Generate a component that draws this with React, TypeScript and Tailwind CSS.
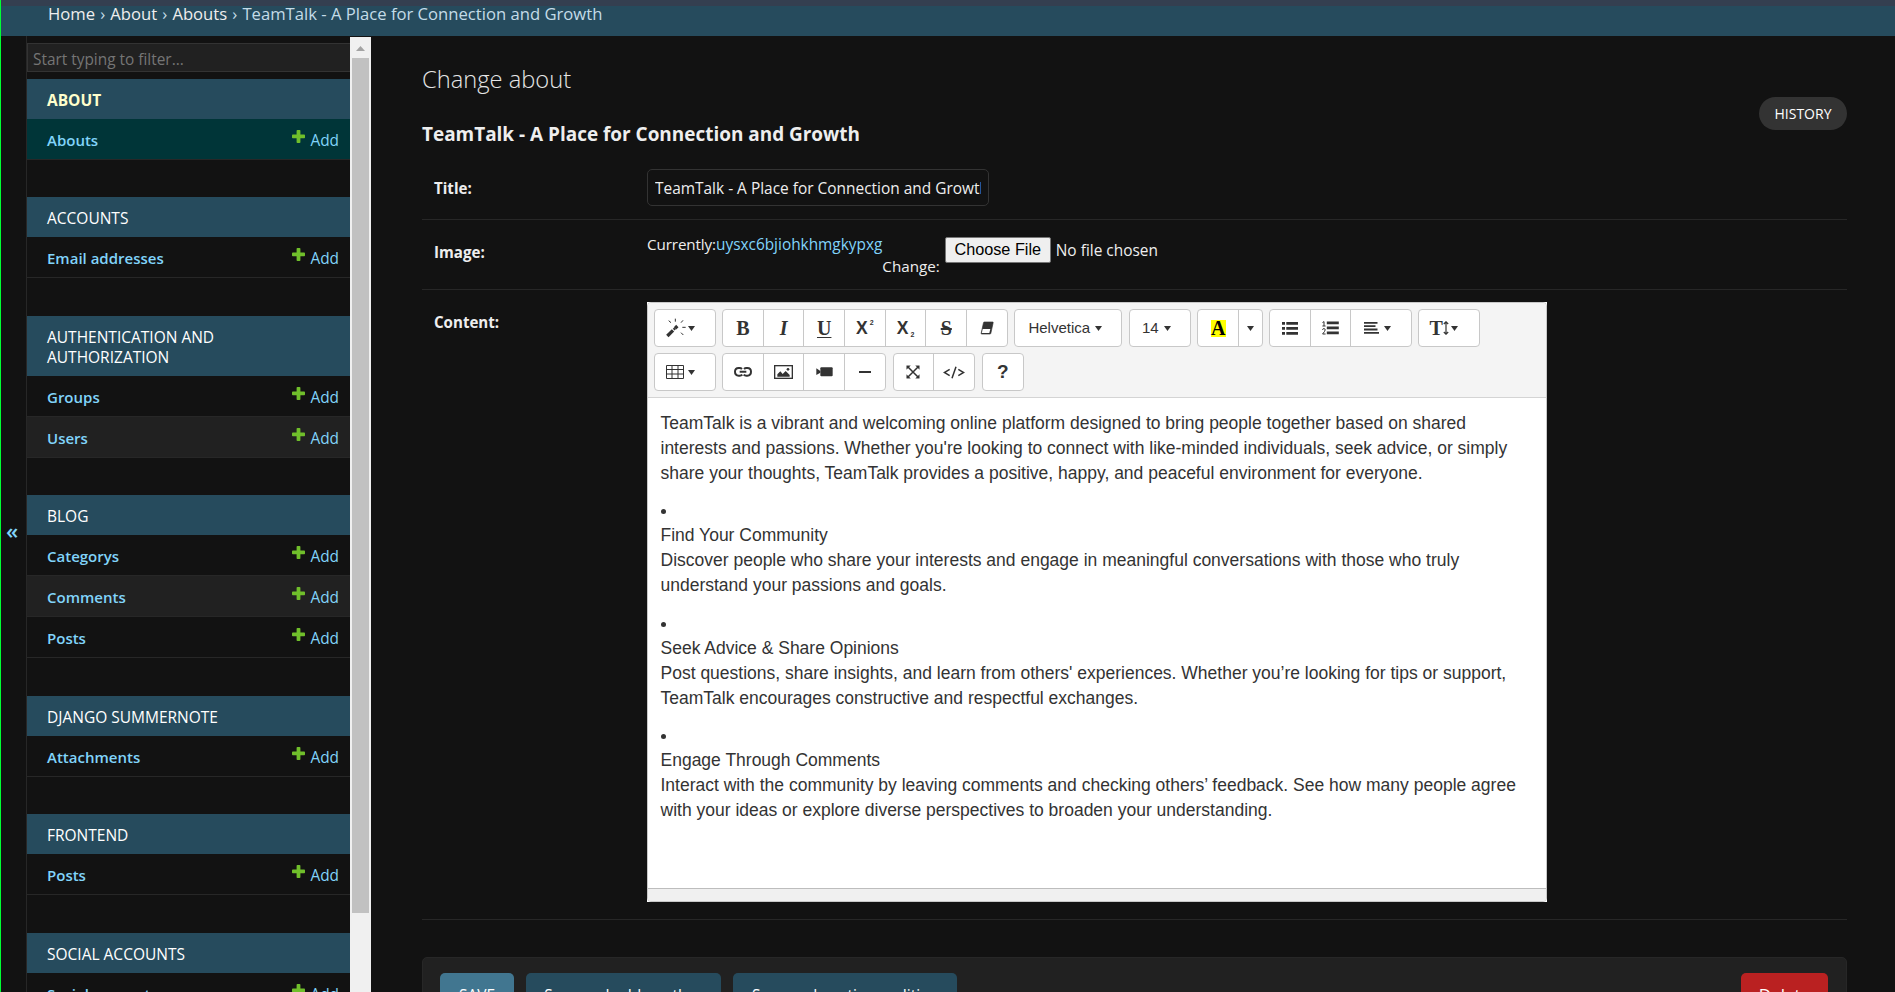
import type { ReactNode } from "react";
import clsx from "clsx";

type Module = { name: ReactNode; active?: boolean; models: string[]; gap: string };

const modules: Module[] = [
  { name: "About", active: true, models: ["Abouts"], gap: "mb-[37px]" },
  { name: "Accounts", models: ["Email addresses"], gap: "mb-[38px]" },
  { name: <>Authentication and<br />Authorization</>, models: ["Groups", "Users"], gap: "mb-[37px]" },
  { name: "Blog", models: ["Categorys", "Comments", "Posts"], gap: "mb-[38px]" },
  { name: "Django Summernote", models: ["Attachments"], gap: "mb-[37px]" },
  { name: "Frontend", models: ["Posts"], gap: "mb-[38px]" },
  { name: "Social Accounts", models: ["Social accounts"], gap: "mb-[37px]" },
];

function AddIcon() {
  return (
    <svg width="13" height="13" viewBox="0 0 13 13" className="mt-[11px] mr-[5px] shrink-0">
      <path d="M4.600.8Q4.600 0 5.400 0h2.200q.8 0 .8.8v3.800h3.800q.8 0 .8.8v2q0 .8-.8.8H8.400v4q0 .8-.8.8H5.400q-.8 0-.8-.8v-4H.8Q0 8.200 0 7.400v-2q0-.8.8-.8h3.800z" fill="#70bf2b" />
    </svg>
  );
}

function SidebarModule({ module }: { module: Module }) {
  return (
    <section className={module.gap}>
      <h2
        className={clsx(
          "bg-[#264b5d] pt-[11px] pb-[9px] pl-5 text-[15.5px] leading-5 uppercase",
          module.active ? "font-bold text-[#ffffcc]" : "text-white",
        )}
      >
        {module.name}
      </h2>
      {module.models.map((model, i) => (
        <div
          key={model}
          className={clsx(
            "flex h-[41px] border-b border-[#272727] pr-[11px] pl-5 leading-[42px] whitespace-nowrap text-[#81d4fa]",
            module.active ? "bg-[#003538]" : i % 2 ? "bg-[#212121]" : "bg-[#121212]",
          )}
        >
          <a className="flex-1 text-[15px] font-semibold">{model}</a>
          <a className="flex text-[15.4px]">
            <AddIcon />
            <span className="leading-[44px]">Add</span>
          </a>
        </div>
      ))}
    </section>
  );
}

function Caret({ className }: { className?: string }) {
  return (
    <svg width="7" height="5" viewBox="0 0 7 5" className={clsx("shrink-0", className)}>
      <path d="M0 0h7L3.500 5z" fill="#333" />
    </svg>
  );
}

function Group({ children }: { children: ReactNode }) {
  return (
    <div className="flex h-[38px] divide-x divide-[#c8c8c8] rounded-[4px] border border-[#c8c8c8] bg-white text-[#333]">
      {children}
    </div>
  );
}

function Tool({ className = "w-[40.7px] justify-center", children }: { className?: string; children: ReactNode }) {
  return <button className={clsx("flex items-center", className)}>{children}</button>;
}

const glyph = "font-['Liberation_Serif',serif] text-[20px] leading-5 font-bold";

function MagicIcon() {
  return (
    <svg width="20" height="20" viewBox="78 66 60 60" fill="none" stroke="#333">
      <path d="M82 120 99 103" strokeWidth="10" />
      <path d="m101 101 4-4" strokeWidth="7" />
      <path d="m105 97 7-7" strokeWidth="10" />
      <path d="M106 68v9M86 74l7 6M129 73l-6 7M127 94h10M123 110l7 7" strokeWidth="3" />
    </svg>
  );
}

function EraserIcon() {
  return (
    <svg width="14" height="14" viewBox="1021 77 42 42">
      <path d="M1034 80h25q2 0 1.500 2l-7 32q-.5 2-2.500 2h-25q-2 0-1.500-2l7-32q.5-2 2.500-2z" fill="#333" stroke="#333" strokeWidth="2" />
      <path d="M1029 101h23l-3 12h-22.500z" fill="#fff" />
    </svg>
  );
}

function ListIcon() {
  return (
    <svg width="16" height="13" viewBox="0 0 16 13" fill="#333">
      <path d="M0 0h3v2.700H0zM0 5h3v2.700H0zM0 10h3v2.700H0zM4.300 0H16v2.700H4.300zM4.300 5H16v2.700H4.300zM4.300 10H16v2.700H4.300z" />
    </svg>
  );
}

function OrderedListIcon() {
  return (
    <svg width="17" height="14" viewBox="0 0 17 14" fill="none" stroke="#333">
      <path d="M.5 1.500L2 .6V5M.4 5h3.200M.5 8.800q.2-1.200 1.400-1.200t1.300 1.200Q3.200 10 .6 13h3" />
      <path d="M4.800 1.900h12M4.800 6.900h12M4.800 11.900h12" strokeWidth="2.600" />
    </svg>
  );
}

function AlignIcon() {
  return (
    <svg width="15" height="12" viewBox="0 0 15 12" fill="#333">
      <path d="M0 0h13.500v1.800H0zM0 3.300h11.500v1.800H0zM0 6.600h13.500v1.800H0zM0 10h15v1.800H0z" />
    </svg>
  );
}

function HeightIcon() {
  return (
    <svg width="6" height="14" viewBox="0 0 6 14" fill="none" stroke="#333" strokeWidth="1.200">
      <path d="M3 1v12M.8 3L3 .8 5.200 3M.8 11L3 13.200 5.200 11" />
    </svg>
  );
}

function TableIcon() {
  return (
    <svg width="18" height="14" viewBox="0 0 18 14" fill="none" stroke="#333">
      <path d="M.5.5h17v13H.5zM.5 4.500h17M.5 9h17M6 .5v13M12 .5v13" />
    </svg>
  );
}

function LinkIcon() {
  return (
    <svg width="18" height="10" viewBox="0 0 54 30" fill="none" stroke="#333" strokeWidth="6">
      <path d="M24 6q-3-3-7-3h-3Q3 3 3 14.500T14 26h3q5 0 8-3M30 6q3-3 7-3h3q11 0 11 11.500T40 26h-3q-5 0-8-3" />
      <path d="M17 14.500h20" />
    </svg>
  );
}

function PictureIcon() {
  return (
    <svg width="19" height="14" viewBox="0 0 57 42">
      <rect x="2" y="2" width="53" height="38" fill="#fff" stroke="#333" strokeWidth="4" />
      <path d="M10 35v-7l9-9 7 8 9-9 12 12v5z" fill="#333" />
      <circle cx="42" cy="13" r="4" fill="#333" />
    </svg>
  );
}

function VideoIcon() {
  return (
    <svg width="17" height="10" viewBox="0 0 51 30" fill="#333">
      <path d="M1 4l12 8v5L1 24z" />
      <rect x="13" y="1" width="37" height="27" rx="3" />
    </svg>
  );
}

function ExpandIcon() {
  return (
    <svg width="14" height="14" viewBox="0 0 42 42" fill="#333" stroke="#333">
      <path d="M6 6l30 30M36 6L6 36" strokeWidth="4.500" />
      <path d="M2 2h11L2 13zM40 2v11L29 2zM2 40V29l11 11zM40 40H29l11-11z" strokeWidth="1" />
    </svg>
  );
}

function CodeIcon() {
  return (
    <svg width="22" height="13" viewBox="0 0 66 39" fill="none" stroke="#333" strokeWidth="4.500">
      <path d="M20 10L4 19.500 20 29M46 10l16 9.500L46 29M39 2L27 37" />
    </svg>
  );
}

function Toolbar() {
  return (
    <div className="flex h-[95px] shrink-0 flex-wrap content-start gap-x-[6.5px] gap-y-[6px] border-b border-[#d4d4d4] bg-[#f4f4f4] pt-[6px] pl-[6px]">
      <Group>
        <Tool className="w-[59.5px] pl-[11px]"><MagicIcon /><Caret className="ml-[2px]" /></Tool>
      </Group>
      <Group>
        <Tool><span className={glyph}>B</span></Tool>
        <Tool><span className={clsx(glyph, "italic")}>I</span></Tool>
        <Tool><span className={clsx(glyph, "underline decoration-1 underline-offset-2")}>U</span></Tool>
        <Tool>
          <span className="flex h-5 gap-[2px] font-['Liberation_Sans',sans-serif] text-[17.5px] leading-[21px] font-bold">
            X<span className="-mt-[6px] text-[7px]">2</span>
          </span>
        </Tool>
        <Tool>
          <span className="flex h-5 gap-[2px] font-['Liberation_Sans',sans-serif] text-[17.5px] leading-[21px] font-bold">
            X<span className="mt-[6px] text-[7px]">2</span>
          </span>
        </Tool>
        <Tool><span className={clsx(glyph, "line-through decoration-2")}>S</span></Tool>
        <Tool className="w-[39.8px] justify-center"><EraserIcon /></Tool>
      </Group>
      <Group>
        <Tool className="w-[106px] pl-[13px] text-[15px]">Helvetica<Caret className="ml-[5px]" /></Tool>
      </Group>
      <Group>
        <Tool className="w-[60px] pl-[12px] text-[15px]">14<Caret className="ml-[5px]" /></Tool>
      </Group>
      <Group>
        <Tool>
          <span className="flex h-[17px] w-[15px] items-center justify-center bg-[#ffff00] font-['Liberation_Serif',serif] text-[20px] font-bold text-black">A</span>
        </Tool>
        <Tool className="w-[22.5px] justify-center"><Caret /></Tool>
      </Group>
      <Group>
        <Tool><ListIcon /></Tool>
        <Tool><OrderedListIcon /></Tool>
        <Tool className="w-[59.5px] pl-[13px]"><AlignIcon /><Caret className="ml-[5px]" /></Tool>
      </Group>
      <Group>
        <Tool className="w-[59.5px] pl-[10px]"><span className={glyph}>T</span><HeightIcon /><Caret className="ml-[2px]" /></Tool>
      </Group>
      <div className="basis-full" />
      <div className="-mt-[6px] flex gap-[6.5px]">
        <Group>
          <Tool className="w-[59.5px] pl-[11px]"><TableIcon /><Caret className="ml-[4px]" /></Tool>
        </Group>
        <Group>
          <Tool><LinkIcon /></Tool>
          <Tool><PictureIcon /></Tool>
          <Tool><VideoIcon /></Tool>
          <Tool className="w-[40px] justify-center"><span className="h-[2px] w-[12px] bg-[#333]" /></Tool>
        </Group>
        <Group>
          <Tool><ExpandIcon /></Tool>
          <Tool className="w-[40px] justify-center"><CodeIcon /></Tool>
        </Group>
        <Group>
          <Tool className="w-[40px] justify-center"><span className="text-[19px] font-bold">?</span></Tool>
        </Group>
      </div>
    </div>
  );
}

function Bullet() {
  return (
    <div className="flex h-[25px] items-center pt-[2px]">
      <span className="size-[5px] rounded-full bg-[#333]" />
    </div>
  );
}

function Editor() {
  return (
    <div className="bg-white">
      <div className="flex h-[600px] w-[900px] flex-col overflow-hidden rounded-[4px] border border-[#c8c8c8] bg-white font-['Liberation_Sans',Arial,sans-serif]">
        <Toolbar />
        <div className="flex-1 space-y-[12.5px] pt-[12.5px] pl-[12.5px] text-[17.5px] leading-[25px] whitespace-nowrap text-[#333]">
          <p>
            TeamTalk is a vibrant and welcoming online platform designed to bring people together based on shared<br />
            interests and passions. Whether you're looking to connect with like-minded individuals, seek advice, or simply<br />
            share your thoughts, TeamTalk provides a positive, happy, and peaceful environment for everyone.
          </p>
          <div>
            <Bullet />
            <p>Find Your Community</p>
            <p>
              Discover people who share your interests and engage in meaningful conversations with those who truly<br />
              understand your passions and goals.
            </p>
          </div>
          <div>
            <Bullet />
            <p>Seek Advice &amp; Share Opinions</p>
            <p>
              Post questions, share insights, and learn from others' experiences. Whether you’re looking for tips or support,<br />
              TeamTalk encourages constructive and respectful exchanges.
            </p>
          </div>
          <div>
            <Bullet />
            <p>Engage Through Comments</p>
            <p>
              Interact with the community by leaving comments and checking others’ feedback. See how many people agree<br />
              with your ideas or explore diverse perspectives to broaden your understanding.
            </p>
          </div>
        </div>
        <div className="h-[13px] shrink-0 border-t border-[#bdbdbd] bg-[#f0f0f0]" />
      </div>
    </div>
  );
}

function Label({ children, className }: { children: string; className: string }) {
  return <label className={clsx("w-[213px] shrink-0 text-[15.1px] leading-5 font-bold text-[#eee]", className)}>{children}</label>;
}

export default function App() {
  return (
    <div className="flex h-[992px] w-full flex-col overflow-hidden border-l border-[#00ff33] bg-[#121212] font-['Open_Sans','Noto_Sans',sans-serif] text-[#eee]">
      <div className="h-[36px] shrink-0 border-t-[6px] border-[#343f50] bg-[#264b5d] pl-[47px] text-[16.65px] whitespace-nowrap text-[#c4dce8]">
        <p className="-mt-[6px] leading-7">
          <span className="[word-spacing:0.8px]">
            <span className="text-[#eee]">Home</span> › <span className="text-[#eee]">About</span> › <span className="text-[#eee]">Abouts</span> ›{" "}
          </span>
          TeamTalk - A Place for Connection and Growth
        </p>
      </div>

      <div className="flex min-h-0 flex-1">
        <button className="flex w-[26px] shrink-0 items-center justify-start border-r border-[#272727] pl-[5px] text-[22px] font-semibold text-[#81d4fa]">
          <span className="mt-[32px] leading-none">«</span>
        </button>
        <nav className="w-[323px] shrink-0 overflow-hidden pt-[7px]">
          <div className="mb-[7px] h-[29px] border border-r-0 border-[#333] bg-[#212121] pl-[5px] text-[15.4px] leading-[32px] text-[#757575]">
            Start typing to filter...
          </div>
          {modules.map((m, i) => (
            <SidebarModule key={i} module={m} />
          ))}
        </nav>
        <div className="mt-[1px] flex w-[21px] shrink-0 flex-col items-center bg-[#f0f0f0]">
          <div className="flex h-[21px] items-center pt-[2px]">
            <svg width="9" height="5" viewBox="0 0 9 5"><path d="M4.500 0L9 5H0z" fill="#a3a3a3" /></svg>
          </div>
          <div className="h-[855px] w-[17px] bg-[#c1c1c1]" />
        </div>

        <main className="flex-1 pt-[28px] pr-[48px] pl-[51px]">
          <div className="flex h-[92px] justify-between">
            <div>
              <h1 className="text-[23.7px] leading-[30px] font-light text-[#e6e6e6]">Change about</h1>
              <h2 className="mt-[26px] text-[18.95px] leading-7 font-bold">TeamTalk - A Place for Connection and Growth</h2>
            </div>
            <a className="mt-[33px] flex h-[33px] w-[88px] items-center justify-center rounded-full bg-[#333] text-[14px] text-white">HISTORY</a>
          </div>

          <div className="flex h-[64px] border-b border-[#272727] pl-[12px]">
            <Label className="mt-[22px]">Title:</Label>
            <div className="mt-[13px] h-[37px] w-[342px] rounded-[5px] border border-[#333] px-[7px] text-[15.45px] leading-[37px]">
              <div className="overflow-hidden whitespace-nowrap">TeamTalk - A Place for Connection and Growth</div>
            </div>
          </div>

          <div className="flex h-[70px] border-b border-[#272727] pl-[12px] text-[15.2px] leading-5 whitespace-nowrap">
            <Label className="mt-[22px]">Image:</Label>
            <span className="mt-[14px] tracking-[-0.1px]">Currently:</span>
            <a className="mt-[15px] text-[15.4px] text-[#81d4fa]">uysxc6bjiohkhmgkypxg</a>
            <span className="mt-[36px]">Change:</span>
            <button className="mt-[17px] ml-[5px] h-[26px] w-[106px] rounded-[2px] border border-[#767676] bg-[#efefef] font-['Liberation_Sans',Arial,sans-serif] text-[16.25px] leading-[22px] text-black">
              <span className="mb-[2px] block">Choose File</span>
            </button>
            <span className="mt-[20px] ml-[5px] text-[15.45px]">No file chosen</span>
          </div>

          <div className="flex h-[630px] border-b border-[#272727] pt-[12px] pl-[12px]">
            <Label className="mt-[10px]">Content:</Label>
            <div><Editor /></div>
          </div>

          <div className="mt-[37px] flex h-[76px] gap-[12px] rounded-[5px] border border-[#272727] bg-[#212121] pr-[18px] pl-[17px] pt-[15px] text-[15.5px] leading-[44px] whitespace-nowrap text-white">
            <button className="h-[44px] w-[74px] rounded-[5px] bg-[#417690]">SAVE</button>
            <button className="h-[44px] w-[195px] rounded-[5px] bg-[#264b5d]">Save and add another</button>
            <button className="h-[44px] w-[224px] rounded-[5px] bg-[#264b5d]">Save and continue editing</button>
            <a className="ml-auto h-[44px] w-[87px] rounded-[5px] bg-[#ba2121] text-center text-[17px]">Delete</a>
          </div>
        </main>
      </div>
    </div>
  );
}
